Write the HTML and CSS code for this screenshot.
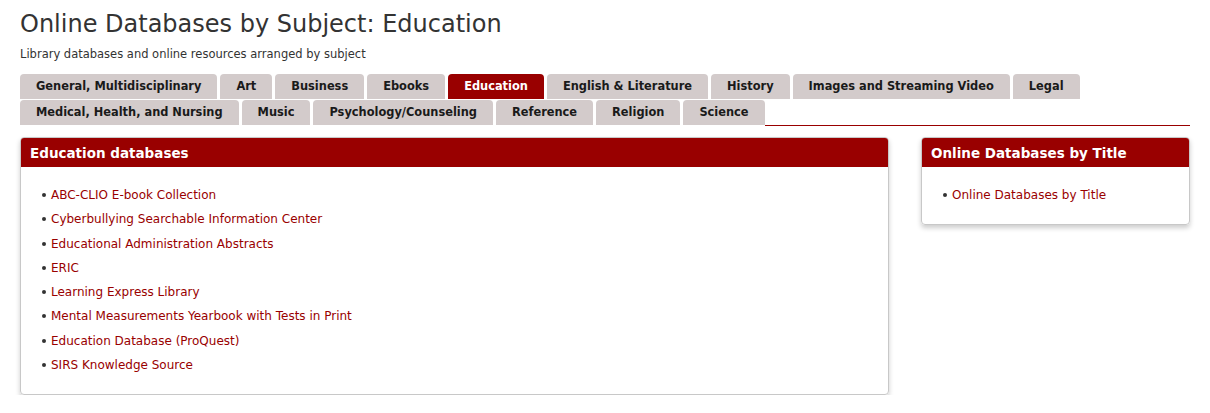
FILE: index.html
```html
<!DOCTYPE html>
<html lang="en">
<head>
<meta charset="utf-8">
<title>Online Databases by Subject: Education</title>
<link rel="stylesheet" href="styles.css">
</head>
<body>
<div class="page">
  <h1 class="title">Online Databases by Subject: Education</h1>
  <p class="subtitle">Library databases and online resources arranged by subject</p>
  <ul class="tabs">
    <li class="tab">General, Multidisciplinary</li>
    <li class="tab">Art</li>
    <li class="tab">Business</li>
    <li class="tab">Ebooks</li>
    <li class="tab active">Education</li>
    <li class="tab">English &amp; Literature</li>
    <li class="tab">History</li>
    <li class="tab">Images and Streaming Video</li>
    <li class="tab">Legal</li>
    <li class="tab">Medical, Health, and Nursing</li>
    <li class="tab">Music</li>
    <li class="tab">Psychology/Counseling</li>
    <li class="tab">Reference</li>
    <li class="tab">Religion</li>
    <li class="tab">Science</li>
    <li class="tab-rest"></li>
  </ul>
  <div class="columns">
    <section class="panel">
      <h2 class="panel-head">Education databases</h2>
      <ul class="links">
        <li><a href="#">ABC-CLIO E-book Collection</a></li>
        <li><a href="#">Cyberbullying Searchable Information Center</a></li>
        <li><a href="#">Educational Administration Abstracts</a></li>
        <li><a href="#">ERIC</a></li>
        <li><a href="#">Learning Express Library</a></li>
        <li><a href="#">Mental Measurements Yearbook with Tests in Print</a></li>
        <li><a href="#">Education Database (ProQuest)</a></li>
        <li><a href="#">SIRS Knowledge Source</a></li>
      </ul>
    </section>
    <section class="panel side">
      <h2 class="panel-head">Online Databases by Title</h2>
      <ul class="links">
        <li><a href="#">Online Databases by Title</a></li>
      </ul>
    </section>
  </div>
</div>
</body>
</html>
```
FILE: styles.css
```css
html, body {
  margin: 0;
  padding: 0;
  background: #fff;
}
body {
  font-family: "DejaVu Sans", Verdana, sans-serif;
  color: #333;
}
.page {
  padding: 0 20px;
}
.title {
  margin: 0;
  padding-top: 10px;
  font-size: 24px;
  font-weight: normal;
  line-height: 28px;
  color: #333;
}
.subtitle {
  margin: 9px 0 0;
  font-size: 11.5px;
  line-height: 14px;
  color: #333;
}
.tabs {
  list-style: none;
  margin: 13px 0 0;
  padding: 0;
  display: flex;
  flex-wrap: wrap;
  column-gap: 3px;
  row-gap: 1px;
}
.tab {
  background: #d3cbcb;
  color: #1a1a1a;
  font-weight: bold;
  font-size: 11.4px;
  line-height: 25px;
  height: 25px;
  padding: 0 16px;
  border-radius: 4px 4px 0 0;
}
.tab.active {
  background: #990000;
  color: #fff;
}
.tab-rest {
  flex: 1;
  border-bottom: 1px solid #990000;
  height: 25px;
  margin-left: -3px;
}
.columns {
  display: grid;
  grid-template-columns: 869px 1fr;
  column-gap: 32px;
  align-items: start;
  margin-top: 11px;
}
.panel {
  border: 1px solid #c8c8c8;
  border-radius: 4px;
  box-shadow: 0 3px 5px rgba(0, 0, 0, 0.2);
  overflow: hidden;
  padding-bottom: 12px;
}
.panel-head {
  margin: 0;
  background: #990000;
  color: #fff;
  font-size: 13.5px;
  font-weight: bold;
  line-height: 27px;
  height: 27px;
  padding: 2px 9px 0;
}
.links {
  margin: 21px 0 0;
  padding: 0 0 0 30px;
  list-style: none;
  font-size: 12px;
  line-height: 14px;
  color: #333;
}
.links li {
  margin-bottom: 10.3px;
  position: relative;
}
.links li::before {
  content: "";
  position: absolute;
  left: -9px;
  top: 5px;
  width: 4px;
  height: 4px;
  border-radius: 50%;
  background: #333;
}
.links a {
  color: #990000;
  text-decoration: none;
}
```
